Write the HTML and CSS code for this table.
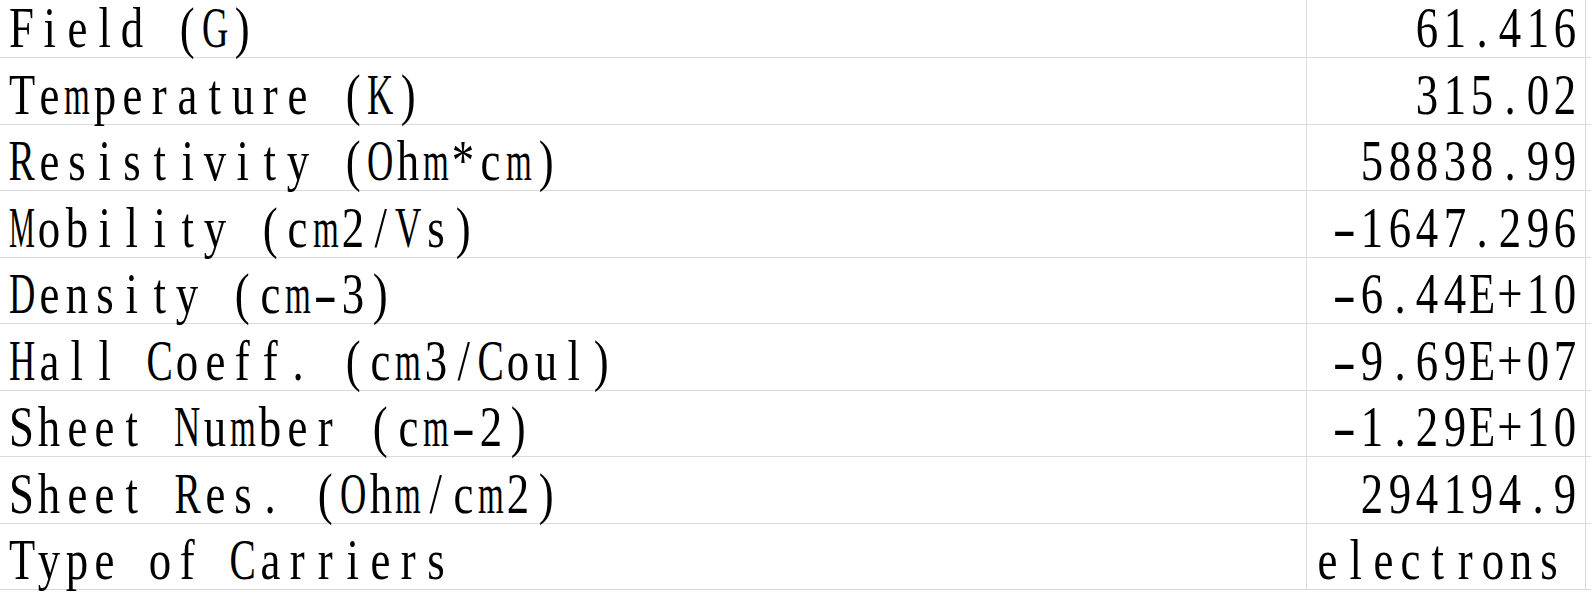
FILE: index.html
```html
<!DOCTYPE html>
<html lang="en">
<head>
<meta charset="utf-8">
<title>Hall measurement</title>
<link rel="stylesheet" href="styles.css">
<script src="script.js" defer></script>
</head>
<body>
<div class="sheet">
  <div class="row r1"><div class="cell label"><span class="txt">Field (G)</span></div><div class="cell num"><span class="txt">61.416</span></div><div class="cell pad"></div></div>
  <div class="row r2"><div class="cell label"><span class="txt">Temperature (K)</span></div><div class="cell num"><span class="txt">315.02</span></div><div class="cell pad"></div></div>
  <div class="row r3"><div class="cell label"><span class="txt">Resistivity (Ohm*cm)</span></div><div class="cell num"><span class="txt">58838.99</span></div><div class="cell pad"></div></div>
  <div class="row r2"><div class="cell label"><span class="txt">Mobility (cm2/Vs)</span></div><div class="cell num"><span class="txt">-1647.296</span></div><div class="cell pad"></div></div>
  <div class="row r3"><div class="cell label"><span class="txt">Density (cm-3)</span></div><div class="cell num"><span class="txt">-6.44E+10</span></div><div class="cell pad"></div></div>
  <div class="row r2"><div class="cell label"><span class="txt">Hall Coeff. (cm3/Coul)</span></div><div class="cell num"><span class="txt">-9.69E+07</span></div><div class="cell pad"></div></div>
  <div class="row r3"><div class="cell label"><span class="txt">Sheet Number (cm-2)</span></div><div class="cell num"><span class="txt">-1.29E+10</span></div><div class="cell pad"></div></div>
  <div class="row r2"><div class="cell label"><span class="txt">Sheet Res. (Ohm/cm2)</span></div><div class="cell num"><span class="txt">294194.9</span></div><div class="cell pad"></div></div>
  <div class="row r3"><div class="cell label"><span class="txt">Type of Carriers</span></div><div class="cell text"><span class="txt">electrons</span></div><div class="cell pad"></div></div>
</div>
</body>
</html>
```
FILE: styles.css
```css
html, body {
  margin: 0;
  padding: 0;
  background: #ffffff;
}
body {
  width: 1591px;
  height: 595px;
  overflow: hidden;
  font-family: "Liberation Serif", "Times New Roman", serif;
  color: #000000;
}
.sheet {
  display: flex;
  flex-direction: column;
}
.row {
  display: grid;
  grid-template-columns: 1307px 279px 1fr;
  border-bottom: 1px solid #dadada;
  box-sizing: border-box;
}
.r1 { height: 58px; }
.r2 { height: 67px; }
.r3 { height: 66px; }
.cell {
  display: flex;
  align-items: flex-end;
  box-sizing: border-box;
  border-right: 1px solid #dadada;
  white-space: pre;
}
.cell.pad { border-right: none; }
.txt {
  display: flex;
  font-size: 56px;
  line-height: 56px;
  margin-bottom: 1.5px;
  white-space: pre;
}
.ch {
  display: flex;
  justify-content: center;
  flex: none;
  width: 27.6px;
  white-space: pre;
}
.g {
  display: block;
  white-space: pre;
  transform: scaleX(0.8);
  transform-origin: center bottom;
}
.label {
  justify-content: flex-start;
  padding-left: 8px;
}
.num {
  justify-content: flex-end;
  padding-right: 6px;
}
.text {
  justify-content: flex-start;
  padding-left: 7px;
}
```
FILE: script.js
```js
document.querySelectorAll('.txt').forEach(function (el) {
  var s = el.textContent;
  el.textContent = '';
  for (var i = 0; i < s.length; i++) {
    var cell = document.createElement('span');
    cell.className = 'ch';
    var g = document.createElement('span');
    g.className = 'g';
    g.textContent = s[i];
    cell.appendChild(g);
    el.appendChild(cell);
  }
});
document.querySelectorAll('.g').forEach(function (g) {
  var w = g.offsetWidth;
  if (!w) return;
  var k = 0.8;
  if (g.textContent === '-') {
    k = 24 / w;
  } else if (w * k > 26) {
    k = 26 / w;
  }
  g.style.transform = 'scaleX(' + k.toFixed(3) + ')';
});
```
